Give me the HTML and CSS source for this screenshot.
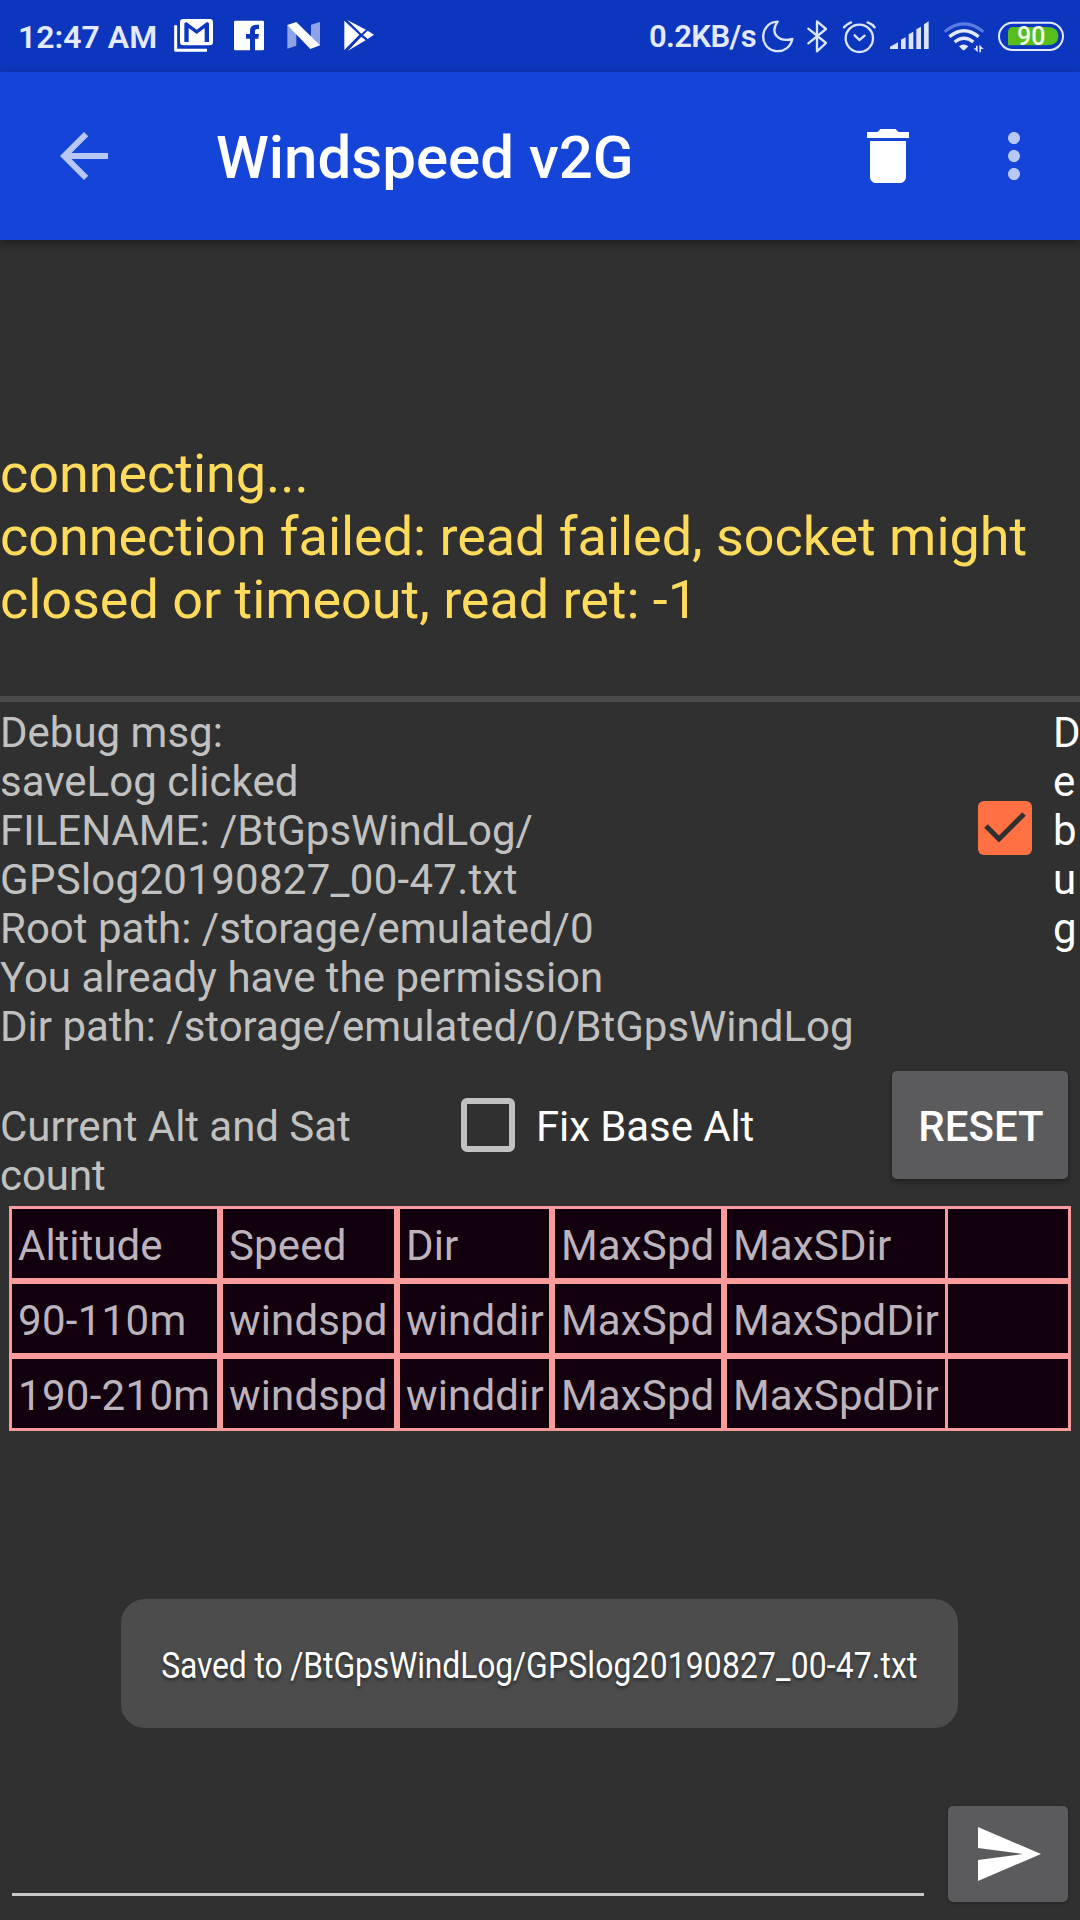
FILE: index.html
```html
<!DOCTYPE html>
<html lang="en">
<head>
<meta charset="utf-8">
<title>Windspeed v2G</title>
<link rel="stylesheet" href="styles.css">
</head>
<body>
<div class="screen">
  <header class="status-bar">
    <span class="clock">12:47 AM</span>
    <div class="notifications">
      <svg width="44" height="72" viewBox="516 0 132 216"><path fill="#fff" fill-rule="evenodd" d="M550 57H629Q639 57 639 67V126Q639 136 629 136H550Q540 136 540 126V67Q540 57 550 57ZM553 126H566V84L590 102L614 84V126H627V70L621 66L590 89L559 66L553 70Z"/><path fill="none" stroke="#fff" stroke-width="9" stroke-linejoin="round" d="M527 76V151H621"/></svg>
      <svg width="38" height="72" viewBox="690 0 114 216"><path fill="#fff" d="M706 62H788Q792 62 792 66V148Q792 151 788 151H765V116H775L777 102H765V94Q765 87 773 87H777V74H768Q750 75 750 92V102H738V116H750V151H706Q702 151 702 147V66Q702 62 706 62Z"/></svg>
      <svg width="42" height="72" viewBox="846 0 126 216"><path fill="#8fa4e6" d="M862 75L889 83V137L862 146ZM933 74L960 66V136L933 128Z"/><path fill="#fff" d="M862 75L889 66L960 136L931 147Z"/></svg>
      <svg width="40" height="72" viewBox="1014 0 120 216"><path fill="#fff" d="M1033 62L1078 104L1033 150ZM1042 60L1098 89L1084 101ZM1103 92L1122 104L1103 117L1089 105ZM1084 110L1097 121L1044 152Z"/></svg>
    </div>
    <span class="speed">0.2KB/s</span>
    <div class="system-icons">
      <svg width="34" height="72" viewBox="393 0 102 216"><path class="line" d="M443 65C390 67 383 143 436 153C463 157 482 140 487 117C445 128 418 100 443 65Z"/></svg>
      <svg width="26" height="72" viewBox="525 0 78 216"><path class="line" d="M535 86L588 129L561 154V64L588 87L535 130"/></svg>
      <svg width="37" height="72" viewBox="633 0 111 216"><circle class="line" cx="688" cy="115" r="41"/><path class="line" d="M674 106L688 120L704 107"/><path class="line" d="M642 82Q650 72 663 67M713 67Q727 72 734 82"/></svg>
      <svg width="44" height="72" viewBox="774 0 132 216"><path fill="#dce5ff" d="M780 147V140L804 127V147ZM813 147V119L827 112V147ZM836 147V103L850 95V147ZM859 147V88L873 80V147ZM882 147V73L896 64V147Z"/></svg>
      <svg width="44" height="72" viewBox="936 0 132 216"><path fill="none" stroke="#5b7de0" stroke-width="9" d="M944 95Q1002 48 1060 95"/><path fill="none" stroke="#e3eaff" stroke-width="10" d="M958 110Q1002 74 1046 110M974 126Q1002 103 1030 126"/><path fill="#e3eaff" d="M987 139Q1001 128 1015 139L1003 151H999ZM1038 137H1043V157L1031 145H1038ZM1048 157V134L1061 147H1053V157Z"/></svg>
      <svg width="70" height="72" viewBox="1098 0 210 216"><rect x="1107" y="68" width="192" height="82" rx="41" fill="none" stroke="#e3eaff" stroke-width="6"/><path fill="#56bd1c" d="M1150 81H1249Q1285 81 1285 109Q1285 136 1249 136H1134V97Q1134 81 1150 81Z"/><text class="battery-level" x="1204" y="135" text-anchor="middle">90</text></svg>
    </div>
  </header>

  <nav class="app-bar">
    <svg class="icon dim" viewBox="0 0 24 24"><path d="M20 11H7.83l5.59-5.59L12 4l-8 8 8 8 1.41-1.41L7.83 13H20v-2z"/></svg>
    <h1 class="title">Windspeed v2G</h1>
    <svg class="icon" viewBox="0 0 24 24"><path d="M6 19c0 1.1.9 2 2 2h8c1.1 0 2-.9 2-2V7H6v12zM19 4h-3.5l-1-1h-5l-1 1H5v2h14V4z"/></svg>
    <svg class="icon dim more" viewBox="0 0 24 24"><path d="M12 8c1.1 0 2-.9 2-2s-.9-2-2-2-2 .9-2 2 .9 2 2 2zm0 2c-1.1 0-2 .9-2 2s.9 2 2 2 2-.9 2-2-.9-2-2-2zm0 6c-1.1 0-2 .9-2 2s.9 2 2 2 2-.9 2-2-.9-2-2-2z"/></svg>
  </nav>

  <section class="connection">
    <p>connecting...<br>connection failed: read failed, socket might<br>closed or timeout, read ret: -1</p>
  </section>

  <section class="debug">
    <p class="debug-log">Debug msg:<br>saveLog clicked<br>FILENAME: /BtGpsWindLog/<br><span class="file-name">GPSlog20190827_00-47.txt</span><br>Root path: /storage/emulated/0<br>You already have the permission<br>Dir path: /storage/emulated/0/BtGpsWindLog</p>
    <div class="debug-toggle">
      <span class="checkbox checked"><svg width="54" height="54" viewBox="0 0 54 54"><path d="M8 25L21 38L46 13" fill="none" stroke="#303030" stroke-width="5"/></svg></span>
      <span class="debug-label">D<br>e<br>b<br>u<br>g</span>
    </div>
  </section>

  <section class="controls">
    <p class="altitude">Current Alt and Sat count</p>
    <div class="fix-base"><span class="checkbox"></span><span class="fix-label">Fix Base Alt</span></div>
    <button class="reset">RESET</button>
  </section>

  <div class="wind-table">
    <div>Altitude</div><div>Speed</div><div>Dir</div><div>MaxSpd</div><div>MaxSDir</div><div></div>
    <div>90-110m</div><div>windspd</div><div>winddir</div><div>MaxSpd</div><div>MaxSpdDir</div><div></div>
    <div>190-210m</div><div>windspd</div><div>winddir</div><div>MaxSpd</div><div>MaxSpdDir</div><div></div>
  </div>

  <footer class="composer">
    <div class="message-input"></div>
    <button class="send"><svg width="63" height="54" viewBox="0 0 63 54"><path fill="#fff" d="M0 0L63 27L0 54V33L45 27L0 21Z"/></svg></button>
  </footer>

  <div class="toast"><p class="toast-text"><span class="toast-path">Saved to /BtGpsWindLog/</span><span class="toast-file">GPSlog20190827_00-47.txt</span></p></div>
</div>
</body>
</html>
```
FILE: styles.css
```css
* { box-sizing: border-box; }
body { margin: 0; }
p, h1 { margin: 0; }
svg { display: block; flex: none; }
button { border: 0; margin: 0; padding: 0; font: inherit; color: #fff; }

.screen {
  position: relative;
  display: flex;
  flex-direction: column;
  width: 1080px;
  height: 1920px;
  overflow: hidden;
  background: #303030;
  color: #c1c1c1;
  font: 42px/49px Roboto, sans-serif;
}

.status-bar {
  display: flex;
  align-items: center;
  height: 72px;
  padding: 0 14px 0 18px;
  background: #0d36bf;
  color: #e3eaff;
  font-weight: 600;
  font-size: 32px;
  line-height: 72px;
  white-space: nowrap;
}
.clock { width: 154px; padding-top: 2px; }
.notifications { display: flex; gap: 14px; }
.speed {
  margin-left: auto;
  margin-right: 5px;
  padding-top: 1px;
  font-size: 31px;
  letter-spacing: -.6px;
}
.system-icons { display: flex; gap: 10px; }
.line {
  fill: none;
  stroke: #dce5ff;
  stroke-width: 7;
  stroke-linecap: round;
  stroke-linejoin: round;
}
.battery-level { fill: #f4fbe8; font-size: 75px; font-weight: 500; }

.app-bar {
  z-index: 1;
  display: flex;
  align-items: center;
  height: 168px;
  padding: 0 30px 0 48px;
  background: #1544d9;
  box-shadow: 0 3px 8px rgba(0, 0, 0, .45);
  color: #fff;
}
.icon { width: 72px; height: 72px; fill: #fff; }
.dim { fill: #b9c7f4; }
.title {
  flex: 1;
  margin-left: 96px;
  padding-top: 4px;
  font-size: 60px;
  line-height: 70px;
  font-weight: 500;
}
.more { margin-left: 54px; }

.connection {
  height: 462px;
  padding-top: 202px;
  border-bottom: 6px solid #4a4a4a;
  color: #ffdb5c;
  font-size: 54px;
  line-height: 63px;
  letter-spacing: -.05px;
}

.debug {
  display: flex;
  justify-content: space-between;
  height: 369px;
  padding-top: 6px;
}
.file-name { letter-spacing: .28px; }
.debug-toggle { display: flex; gap: 21px; width: 102px; }
.checkbox {
  flex: none;
  width: 54px;
  height: 54px;
  border: 6px solid #c1c1c1;
  border-radius: 6px;
}
.checked { margin-top: 93px; border: 0; background: #ff7043; }
.debug-label { color: #fff; }

.controls {
  display: flex;
  height: 135px;
  padding-right: 12px;
}
.altitude { width: 461px; padding: 31px 60px 0 0; letter-spacing: -.05px; }
.fix-base {
  display: flex;
  align-items: center;
  gap: 21px;
  height: 54px;
  margin-top: 27px;
  color: #fff;
}
.fix-label { padding-top: 2px; letter-spacing: -.1px; }
.reset {
  width: 176px;
  height: 108px;
  margin-left: auto;
  padding: 2px 0 0 2px;
  border-radius: 5px;
  background: #5b5b5d;
  box-shadow: 0 3px 5px rgba(0, 0, 0, .35);
  font-weight: 500;
}

.wind-table {
  display: grid;
  grid-template-columns: 211px 177px 155px 172px 224px 123px;
  grid-auto-rows: 75px;
  margin: 0 9px;
  background: #12000f;
  color: #bdb3bd;
}
.wind-table div {
  padding: 12px 0 0 6px;
  border: 3px solid #fa9b9b;
  letter-spacing: .15px;
  white-space: nowrap;
}
.wind-table div:nth-child(6n) { border-left: 0; }
.wind-table div:nth-child(6n + 1) { letter-spacing: .3px; }
.wind-table div:first-child { letter-spacing: 0; }

.composer {
  display: flex;
  align-items: flex-end;
  justify-content: space-between;
  margin-top: auto;
  padding: 0 12px 18px;
}
.message-input {
  width: 912px;
  height: 90px;
  margin-bottom: 6px;
  border-bottom: 3px solid #c9c7c9;
}
.send {
  display: flex;
  align-items: center;
  width: 120px;
  height: 96px;
  padding-left: 30px;
  border-radius: 5px;
  background: #5b5b5d;
  box-shadow: 0 1px 3px rgba(0, 0, 0, .3);
}

.toast {
  position: absolute;
  left: 121px;
  top: 1599px;
  display: flex;
  align-items: center;
  justify-content: center;
  width: 837px;
  height: 129px;
  padding-top: 6px;
  border-radius: 24px;
  background: #4c4c4c;
  color: #fff;
  font-size: 36px;
  white-space: nowrap;
  text-shadow: 0 2px 4px rgba(0, 0, 0, .5);
}
.toast-text { transform: scaleX(.885); }
.toast-path { letter-spacing: -.13px; }
.toast-file { letter-spacing: .18px; }
```
